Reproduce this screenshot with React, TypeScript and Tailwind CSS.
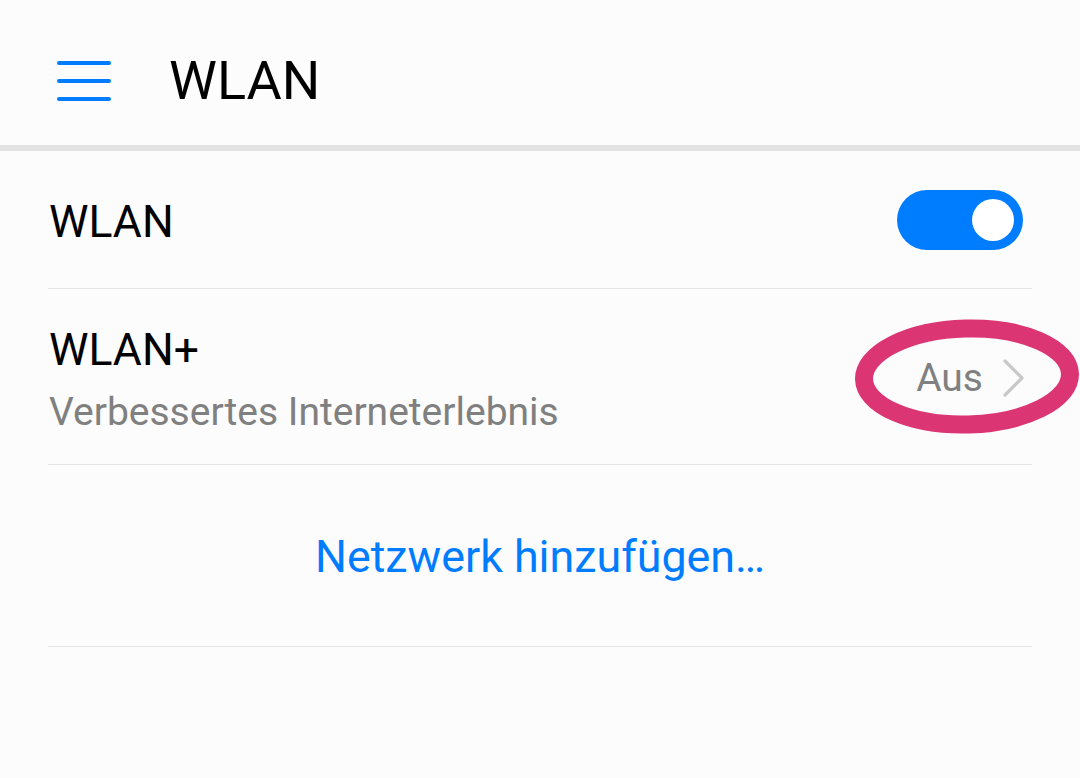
import { useState } from "react";

// EMUI-style WLAN settings page, with the "Aus" state of WLAN+ circled in pink.
export default function App() {
  const [on, setOn] = useState(true);

  return (
    <div className="min-h-[778px] w-[1080px] bg-[#fcfcfc] font-['Roboto',sans-serif] text-black">
      {/* header */}
      <header className="flex h-[145px] items-center pt-[17px]">
        <button className="ml-[57px] flex h-[40px] w-[54px] flex-col justify-between" aria-label="Menü">
          <span className="h-[4px] w-full rounded-full bg-[#007dff]" />
          <span className="h-[4px] w-full rounded-full bg-[#007dff]" />
          <span className="h-[4px] w-full rounded-full bg-[#007dff]" />
        </button>
        <h1 className="ml-[58px] text-[54px] leading-none">WLAN</h1>
      </header>
      <div className="h-[6px] bg-[#e3e3e3]" />

      <div className="mx-[48px]">
        {/* WLAN switch */}
        <div className="flex h-[138px] items-center justify-between border-b border-[#e5e5e5] pl-px pr-[9px]">
          <span className="mt-[5px] text-[44.5px] leading-none">WLAN</span>
          <button
            onClick={() => setOn(!on)}
            className={`flex h-[60px] w-[126px] items-center rounded-full px-[9px] ${
              on ? "justify-end bg-[#007dff]" : "justify-start bg-[#cfcfcf]"
            }`}
          >
            <span className="h-[42px] w-[42px] rounded-full bg-white" />
          </button>
        </div>

        {/* WLAN+ */}
        <div className="relative flex h-[176px] items-center justify-between border-b border-[#e5e5e5] pl-px pr-[8px]">
          <div className="mt-[7px] flex flex-col">
            <span className="text-[44.5px] leading-[64px]">WLAN+</span>
            <span className="text-[39px] leading-[61px] text-[#808080]">Verbessertes Interneterlebnis</span>
          </div>
          <div className="mt-[3px] flex items-center gap-[20px]">
            <span className="text-[39px] leading-none text-[#808080]">Aus</span>
            <svg width="21" height="38" viewBox="0 0 21 38" fill="none">
              <path d="M2 2 L19 19 L2 36" stroke="#c8c8c8" strokeWidth="3.2" strokeLinecap="round" strokeLinejoin="round" />
            </svg>
          </div>
          {/* hand-drawn highlight */}
          <svg
            className="pointer-events-none absolute left-[806px] top-[30px]"
            width="226"
            height="115"
            viewBox="0 0 226 115"
            fill="none"
          >
            <ellipse cx="113" cy="57.5" rx="103" ry="48" stroke="#dc3573" strokeWidth="18" transform="rotate(-1.5 113 57.5)" />
          </svg>
        </div>

        {/* add network */}
        <div className="flex h-[182px] items-center justify-center border-b border-[#e5e5e5]">
          <span className="mt-[3px] text-[44.8px] leading-none text-[#007dff]">Netzwerk hinzufügen…</span>
        </div>
      </div>
    </div>
  );
}
